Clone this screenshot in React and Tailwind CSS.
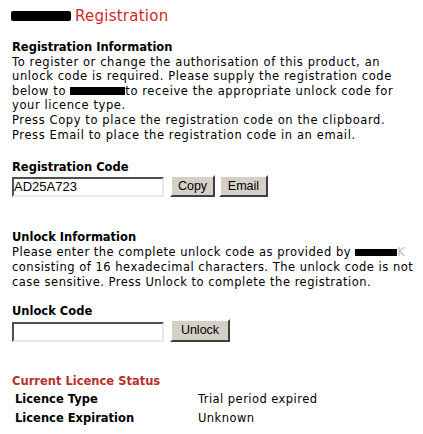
export default function App() {
    return (
        <div className="min-h-[434px] w-[423px] overflow-hidden bg-white pl-[12px] text-[11.5px] text-black whitespace-nowrap font-['DejaVu_Sans',Verdana,sans-serif]">
            <div className="flex items-center gap-[4px] pt-[7px] leading-[18px]">
                <span className="inline-block h-[10px] w-[60px] -ml-[1px] rounded-[2px] bg-black" />
                <span className="text-[15px] tracking-[0.25px] text-[#d02828]">Registration</span>
            </div>

            <div className="mt-[15px] leading-[14.6px]">
                <div className="font-bold">Registration Information</div>
                <div className="tracking-[0.6px]">
                    <div>To register or change the authorisation of this product, an</div>
                    <div>unlock code is required. Please supply the registration code</div>
                    <div className="flex items-center whitespace-pre">
                        <span>below to </span>
                        <span className="inline-block h-[8px] w-[55px] bg-black" />
                        <span>to receive the appropriate unlock code for</span>
                    </div>
                    <div>your licence type.</div>
                    <div>Press Copy to place the registration code on the clipboard.</div>
                    <div>Press Email to place the registration code in an email.</div>
                </div>
            </div>

            <div className="mt-[18px] leading-[14.6px] font-bold">Registration Code</div>
            <div className="flex items-end h-[22px] font-['Liberation_Sans',Arial,sans-serif] text-[12.5px]">
                <input
                    readOnly
                    defaultValue="AD25A723"
                    className="h-[20px] w-[152px] border-2 border-t-[#505050] border-l-[#505050] border-r-[#e8e8e8] border-b-[#e8e8e8] bg-white px-0 text-[13px] text-black outline-none"
                />
                <button className="ml-[6px] h-[22px] w-[45px] border-2 border-t-white border-l-white border-r-[#404040] border-b-[#404040] bg-[#d4d0c8] text-black">
                    Copy
                </button>
                <button className="ml-[4px] h-[22px] w-[49px] border-2 border-t-white border-l-white border-r-[#404040] border-b-[#404040] bg-[#d4d0c8] text-black">
                    Email
                </button>
            </div>

            <div className="mt-[33px] leading-[15px]">
                <div className="font-bold">Unlock Information</div>
                <div className="tracking-[0.5px]">
                    <div className="flex items-center whitespace-pre">
                        <span>Please enter the complete unlock code as provided by </span>
                        <span className="inline-block h-[7px] w-[42px] bg-black" />
                        <span className="text-[#bbb]">K</span>
                    </div>
                    <div>consisting of 16 hexadecimal characters. The unlock code is not</div>
                    <div>case sensitive. Press Unlock to complete the registration.</div>
                </div>
            </div>

            <div className="mt-[14px] leading-[15px] font-bold">Unlock Code</div>
            <div className="flex items-end h-[23px] font-['Liberation_Sans',Arial,sans-serif] text-[12.5px]">
                <input
                    readOnly
                    className="h-[20px] w-[152px] border-2 border-t-[#505050] border-l-[#505050] border-r-[#e8e8e8] border-b-[#e8e8e8] bg-white outline-none"
                />
                <button className="ml-[6px] h-[23px] w-[60px] border-2 border-t-white border-l-white border-r-[#404040] border-b-[#404040] bg-[#d4d0c8] text-black">
                    Unlock
                </button>
            </div>

            <div className="mt-[32px] leading-[15px] font-bold text-[#b8302a]">Current Licence Status</div>
            <div className="mt-[1px] pl-[3px]">
                <div className="grid grid-cols-[183px_1fr] h-[19px] items-center">
                    <span className="font-bold">Licence Type</span>
                    <span className="tracking-[0.45px]">Trial period expired</span>
                </div>
                <div className="grid grid-cols-[183px_1fr] h-[19px] items-center">
                    <span className="font-bold">Licence Expiration</span>
                    <span className="tracking-[0.45px]">Unknown</span>
                </div>
            </div>
        </div>
    );
}
